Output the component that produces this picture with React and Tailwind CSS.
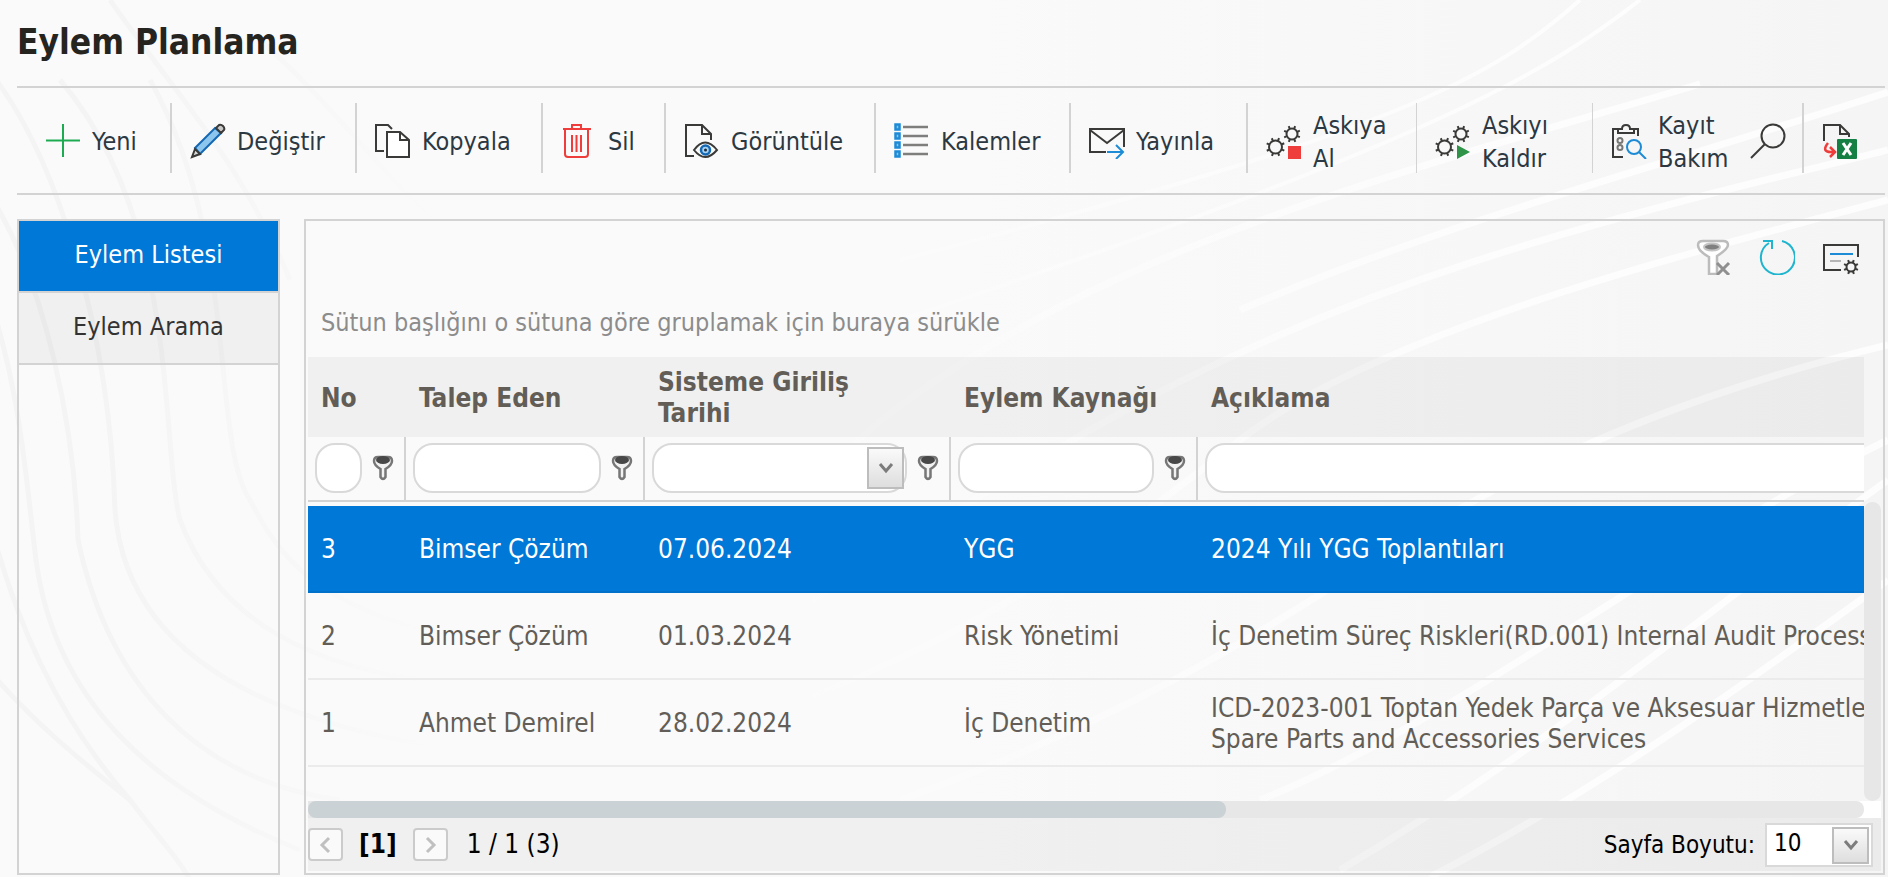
import { useState } from 'react';

const COLUMNS = [
  { key: 'no', label: 'No', width: 'w-[98px]' },
  { key: 'requester', label: 'Talep Eden', width: 'w-[239px]' },
  { key: 'date', label: 'Sisteme Giriliş Tarihi', width: 'w-[306px]', picker: true },
  { key: 'source', label: 'Eylem Kaynağı', width: 'w-[247px]' },
  { key: 'description', label: 'Açıklama', width: '' },
];

const ROWS = [
  { no: 3, requester: 'Bimser Çözüm', date: '07.06.2024', source: 'YGG', description: '2024 Yılı YGG Toplantıları' },
  { no: 2, requester: 'Bimser Çözüm', date: '01.03.2024', source: 'Risk Yönetimi', description: 'İç Denetim Süreç Riskleri(RD.001) Internal Audit Process' },
  { no: 1, requester: 'Ahmet Demirel', date: '28.02.2024', source: 'İç Denetim', description: 'ICD-2023-001 Toptan Yedek Parça ve Aksesuar Hizmetleri\nSpare Parts and Accessories Services' },
];

/* ---------- icons ---------- */

function Svg({ children, className = 'w-9 h-9', viewBox = '0 0 36 36' }) {
  return (
    <svg viewBox={viewBox} className={`shrink-0 ${className}`} fill="none" stroke="#3a3a38" strokeWidth="2" aria-hidden="true">
      {children}
    </svg>
  );
}

function Gear({ cx, cy, r, tooth = 3, width = 2 }) {
  return (
    <g transform={`translate(${cx} ${cy})`} strokeWidth={width}>
      <circle r={r} />
      {[0, 45, 90, 135, 180, 225, 270, 315].map((a) => (
        <path key={a} d={`M0 ${-r}V${-r - tooth}`} transform={`rotate(${a + 22})`} />
      ))}
    </g>
  );
}

const PlusIcon = () => (
  <Svg>
    <path d="M18 1V34M1 17.5H35" stroke="#1dab52" />
  </Svg>
);

const PencilIcon = () => (
  <Svg>
    <path d="M5 25L25 5L31 10L10 31Z" fill="#8cc5ee" stroke="#1468b3" />
    <path d="M26 5L29 2Q31 1 33 3T34 7L31 10Z" fill="#c9c9c9" />
    <path d="M5 26L2 34L10 31Z" fill="#d8d8d8" />
  </Svg>
);

const CopyIcon = () => (
  <Svg>
    <path d="M9 28H1V2H13L17 6" />
    <path d="M12 9H25L34 17V34H12Z" fill="#fff" />
    <path d="M25 9V17H34" />
  </Svg>
);

const TrashIcon = () => (
  <Svg>
    <g stroke="#ee3d3a">
      <path d="M2 6H30M11 6V2H20V6M4 6V31Q4 34 7 34H24Q27 34 27 31V6" />
      <path d="M11 12V29M15.500 12V29M20 12V29" />
    </g>
  </Svg>
);

const PreviewIcon = () => (
  <Svg>
    <path d="M10 33H2V2H18L27 11V17" />
    <path d="M18 2V11H27" />
    <path d="M10 27Q21 12 33 27Q21 41 10 27Z" />
    <circle cx="21.500" cy="27" r="4.500" fill="#a8d2f2" stroke="#1468b3" strokeWidth="2.500" />
    <circle cx="21.500" cy="27" r="1.500" fill="#1c2a38" stroke="none" />
  </Svg>
);

const ListIcon = () => (
  <Svg>
    {[2, 11, 20, 29].map((y) => (
      <g key={y}>
        <rect x="1.500" y={y - 0.5} width="4" height="5" fill="#8cc5ee" stroke="#1d8bd6" strokeWidth="2.500" />
        <path d={`M9 ${y + 2}H34`} stroke="#7e7e7c" strokeWidth="2.500" />
      </g>
    ))}
  </Svg>
);

const MailIcon = () => (
  <Svg>
    <path d="M17 29H1V6H35V24M1 7L18 20L35 7" />
    <path d="M18 29H34M27 22L34 29L27 36" stroke="#1d8bd6" />
  </Svg>
);

const SuspendIcon = () => (
  <Svg>
    <Gear cx={9.5} cy={24} r={6.5} />
    <Gear cx={26} cy={11} r={5.5} />
    <rect x="22" y="23" width="13" height="13" fill="#ee3d3a" stroke="none" />
  </Svg>
);

const ResumeIcon = () => (
  <Svg>
    <Gear cx={9.5} cy={24} r={6.5} />
    <Gear cx={26} cy={11} r={5.5} />
    <path d="M22 22L35 29L22 36Z" fill="#2f9447" stroke="none" />
  </Svg>
);

const MaintainIcon = () => (
  <Svg>
    <path d="M12 34H2V6H6M24 6H27V13" />
    <path d="M7 10V6H11Q11 2 15 2T19 6H23V10Z" />
    <g stroke="#777775">
      <circle cx="9" cy="17.500" r="2.500" />
      <circle cx="9" cy="24.500" r="2.500" />
    </g>
    <g stroke="#1d8bd6">
      <circle cx="23" cy="24" r="7" />
      <path d="M28 29L35 36" />
    </g>
  </Svg>
);

const SearchIcon = () => (
  <Svg>
    <circle cx="23" cy="13" r="11.500" />
    <path d="M15 21L1 35" />
  </Svg>
);

const ExcelIcon = () => (
  <Svg>
    <path d="M2 18V2H18L27 11V14" />
    <path d="M18 2V11H27" />
    <path d="M6 20Q-1 29 9 29H13M8 24L13 29L8 34" stroke="#ee3d3a" strokeWidth="2.500" />
    <rect x="15" y="16" width="20" height="20" rx="1" fill="#158043" stroke="none" />
    <path d="M21 20L29 32M29 20L21 32" stroke="#fff" strokeWidth="3" />
  </Svg>
);

const ClearFilterIcon = () => (
  <Svg>
    <path d="M3 6Q3 2 8 2H28Q33 2 33 6T22 17V35H14V18Q3 12 3 6Z" fill="#fff" stroke="#bcbcbc" strokeWidth="2.500" />
    <ellipse cx="17" cy="8" rx="8" ry="3.500" fill="#808080" stroke="#c4c4c4" />
    <path d="M22 24L34 36M34 24L22 36" stroke="#8f8f8f" strokeWidth="3" />
  </Svg>
);

const RefreshIcon = () => (
  <Svg>
    <path d="M23 2A17 17 0 1 1 10 4M4 2H13V10" stroke="#1fb5ce" />
  </Svg>
);

const LayoutIcon = () => (
  <Svg>
    <path d="M18 31H1V6H35V18" />
    <path d="M7 15H30" stroke="#1d8bd6" />
    <path d="M7 22H18" stroke="#b5b5b5" />
    <Gear cx={28} cy={28} r={4.5} tooth={3} />
  </Svg>
);

const FunnelIcon = () => (
  <Svg className="w-[22px] h-[26px]" viewBox="0 0 22 26">
    <path d="M2 6Q2 2 6 2H16Q20 2 20 6T13.500 14V22Q11 26 8.500 22V14Q2 10 2 6Z" fill="#f2f2f2" stroke="#777" strokeWidth="2.500" />
    <ellipse cx="11" cy="5" rx="7" ry="4" fill="#484848" stroke="none" />
  </Svg>
);

const Chevron = ({ d = 'M4 6L10 13L16 6', color = '#7c7c7c' }) => (
  <Svg className="w-5 h-5" viewBox="0 0 20 20">
    <path d={d} stroke={color} strokeWidth="3" />
  </Svg>
);

/* ---------- page parts ---------- */

const TOOLS = [
  { label: 'Yeni', icon: PlusIcon, box: 'w-[155px] pl-7 border-r-2' },
  { label: 'Değiştir', icon: PencilIcon, box: 'w-[185px] pl-[18px] border-r-2' },
  { label: 'Kopyala', icon: CopyIcon, box: 'w-[186px] pl-[18px] border-r-2' },
  { label: 'Sil', icon: TrashIcon, box: 'w-[123px] pl-[18px] border-r-2' },
  { label: 'Görüntüle', icon: PreviewIcon, box: 'w-[210px] pl-[18px] border-r-2' },
  { label: 'Kalemler', icon: ListIcon, box: 'w-[195px] pl-[18px] border-r-2' },
  { label: 'Yayınla', icon: MailIcon, box: 'w-[177px] pl-[18px] border-r-2' },
  { label: 'Askıya Al', icon: SuspendIcon, box: 'w-[169px] pl-[18px] border-r' },
  { label: 'Askıyı Kaldır', icon: ResumeIcon, box: 'w-[176px] pl-[18px] border-r' },
  { label: 'Kayıt Bakım', icon: MaintainIcon, box: 'w-[140px] pl-[18px]' },
];

function Waves() {
  return (
    <svg className="absolute inset-0 -z-10 w-full h-full" viewBox="0 0 1888 877" preserveAspectRatio="xMidYMid slice" fill="none" aria-hidden="true">
      <defs>
        <linearGradient id="shade" gradientUnits="userSpaceOnUse" x1="100" y1="0" x2="440" y2="0">
          <stop offset="0" stopColor="#f4f4f4" />
          <stop offset="1" stopColor="#f4f4f4" stopOpacity="0" />
        </linearGradient>
        <linearGradient id="streak" gradientUnits="userSpaceOnUse" x1="700" y1="0" x2="1600" y2="0">
          <stop offset="0" stopColor="#fff" stopOpacity="0" />
          <stop offset="1" stopColor="#fff" stopOpacity="0.8" />
        </linearGradient>
      </defs>
      <g stroke="url(#shade)" strokeWidth="5">
        <path d="M-20 60C60 150 110 340 115 510C125 640 240 720 460 750" />
        <path d="M-20 270C20 380 25 470 36 560C55 700 150 790 300 850" />
        <path d="M-20 180C50 280 75 440 78 540C110 690 200 780 340 800" />
        <path d="M60 80C180 220 160 440 180 520C210 600 280 660 420 680" />
        <path d="M150 80C240 240 210 440 250 500C290 580 340 610 460 640" />
        <path d="M-20 480C10 620 60 720 130 800C160 840 180 860 190 880" />
        <path d="M-20 660C30 720 80 760 130 800" />
        <path d="M110 0C180 100 240 160 290 280" />
        <path d="M260 40C340 110 400 200 460 240" />
      </g>
      <g stroke="url(#streak)" strokeWidth="7">
        <path d="M1888 92C1650 170 1450 220 1240 310" />
        <path d="M1700 84C1480 150 1200 220 1000 340S850 480 700 560" />
        <path d="M1888 150C1600 220 1350 280 1090 430S800 640 560 690" />
        <path d="M1888 200C1700 250 1380 330 1240 440S900 700 560 770" />
        <path d="M1888 345C1700 390 1560 450 1440 520S1180 700 900 800" />
        <path d="M1888 440C1700 530 1460 720 1260 800" />
        <path d="M1888 480C1720 600 1560 740 1340 870" />
        <path d="M1888 580C1750 680 1600 790 1430 877" />
        <path d="M1580 0C1490 80 1400 130 900 260" strokeWidth="4" />
        <path d="M1640 0C1550 70 1440 140 900 320" strokeWidth="4" />
      </g>
    </svg>
  );
}

function Toolbar() {
  return (
    <div role="toolbar" className="border-y-2 border-[#d3d3d3] pt-[15px] pb-5 flex text-[#2c3842]">
      {TOOLS.map(({ label, icon: Icon, box }) => (
        <button key={label} type="button" className={`h-[70px] pt-[5px] pr-3 shrink-0 flex items-center gap-[11px] border-[#d3d3d3] text-left leading-[33px] ${box}`}>
          <Icon />
          <span className="min-w-0 pt-[2px]">{label}</span>
        </button>
      ))}
      <button type="button" aria-label="Ara" className="w-[71px] shrink-0 h-[70px] pt-[5px] pl-[17px] flex items-center border-r-2 border-[#d3d3d3]">
        <SearchIcon />
      </button>
      <button type="button" aria-label="Excel'e Aktar" className="h-[70px] pt-[5px] pl-[18px] shrink-0 flex items-center">
        <ExcelIcon />
      </button>
    </div>
  );
}

function Sidebar() {
  const [tab, setTab] = useState('Eylem Listesi');
  return (
    <nav className="w-[263px] shrink-0 border-2 border-[#d3d3d3]">
      {['Eylem Listesi', 'Eylem Arama'].map((t) => (
        <button
          key={t}
          type="button"
          onClick={() => setTab(t)}
          className={`block w-full h-[72px] pb-[2px] border-b-2 border-[#d3d3d3] ${t === tab ? 'bg-[#0078d7] text-white' : 'bg-black/4 text-[#333]'}`}
        >
          {t}
        </button>
      ))}
    </nav>
  );
}

function FilterCell({ column, last }) {
  return (
    <td className={`h-[65px] p-0 border-b-2 border-[#d3d3d3] ${last ? '' : 'border-r-2'}`}>
      <div className="flex items-center pl-[7px] pr-[10px] pb-[2px]">
        <div className="relative flex-1 min-w-0">
          <input type="text" aria-label={column.label} className="block w-full h-[50px] px-3 rounded-[20px] border-2 border-[#d9d9d9] bg-white outline-none" />
          {column.picker && (
            <button type="button" aria-label="Tarih seç" className="absolute right-[3px] top-1 w-[37px] h-[42px] flex items-center justify-center border-2 border-[#bdbdbd] bg-linear-to-b from-[#fafafa] to-[#dedede]">
              <Chevron />
            </button>
          )}
        </div>
        {!last && (
          <button type="button" aria-label={`${column.label} filtresi`} className="ml-[10px]">
            <FunnelIcon />
          </button>
        )}
      </div>
    </td>
  );
}

function ActionTable() {
  const [selected, setSelected] = useState(3);
  return (
    <table className="w-[2640px] table-fixed border-separate border-spacing-0 text-left text-[26px] text-[#625e57] leading-[31px]">
      <thead>
        <tr className="bg-black/4">
          {COLUMNS.map((c) => (
            <th key={c.key} className={`h-20 pt-[2px] pb-0 pl-[13px] pr-8 font-bold ${c.width}`}>{c.label}</th>
          ))}
        </tr>
        <tr>
          {COLUMNS.map((c, i) => (
            <FilterCell key={c.key} column={c} last={i === COLUMNS.length - 1} />
          ))}
        </tr>
      </thead>
      <tbody className="before:block before:h-1">
        {ROWS.map((row) => (
          <tr key={row.no} onClick={() => setSelected(row.no)} className={row.no === selected ? 'bg-[#0078d7] text-white' : ''}>
            {COLUMNS.map((c) => (
              <td
                key={c.key}
                className={`h-[87px] pt-[2px] pb-0 px-[13px] border-b-2 whitespace-pre-line ${row.no === selected ? 'border-[#0071cb]' : 'border-[#ebebeb]'}`}
              >
                {row[c.key]}
              </td>
            ))}
          </tr>
        ))}
      </tbody>
    </table>
  );
}

function PageButton({ label, d }) {
  return (
    <button type="button" aria-label={label} className="w-[35px] h-[33px] flex items-center justify-center rounded border-2 border-[#cbcbcb] bg-[#fafafa]">
      <Chevron d={d} color="#c0c0c0" />
    </button>
  );
}

function Pager() {
  return (
    <div className="h-[53px] bg-black/4 flex items-center justify-between pr-2 text-black">
      <div className="flex items-center text-[26px]">
        <PageButton label="Önceki" d="M13 3L6 10L13 17" />
        <span className="font-bold px-4">[1]</span>
        <PageButton label="Sonraki" d="M7 3L14 10L7 17" />
        <span className="pl-[19px]">1 / 1 (3)</span>
      </div>
      <div className="flex items-center gap-[10px] text-2xl">
        <label htmlFor="page-size">Sayfa Boyutu:</label>
        <div className="relative">
          <select id="page-size" defaultValue="10" className="block w-[108px] h-11 pl-[7px] pb-1 appearance-none border-2 border-[#d9d9d9] bg-white outline-none">
            <option>10</option>
            <option>20</option>
            <option>50</option>
          </select>
          <span className="absolute right-1 top-1 w-[37px] h-[37px] flex items-center justify-center pointer-events-none border-2 border-[#bdbdbd] bg-linear-to-b from-[#fafafa] to-[#dedede]">
            <Chevron />
          </span>
        </div>
      </div>
    </div>
  );
}

export default function App() {
  return (
    <div className="relative isolate min-h-screen overflow-hidden flex flex-col bg-linear-to-r from-[#fafafa] via-[#fafafa] to-[#f5f5f5] pl-[17px] pr-[3px] pb-[2px] font-['DejaVu_Sans_Condensed','Noto_Sans',sans-serif] text-[25px]">
      <Waves />
      <h1 className="h-[86px] pb-[2px] flex items-center text-[35px] font-bold text-[#25241f]">Eylem Planlama</h1>
      <Toolbar />

      <div className="mt-6 flex-1 flex gap-6">
        <Sidebar />

        <main className="flex-1 min-w-0 flex flex-col border-2 border-[#d3d3d3] px-[2px] pb-[2px]">
          <div className="h-[72px] pr-[22px] flex items-center justify-end gap-7">
            <button type="button" aria-label="Filtreyi temizle"><ClearFilterIcon /></button>
            <button type="button" aria-label="Yenile"><RefreshIcon /></button>
            <button type="button" aria-label="Görünüm ayarları"><LayoutIcon /></button>
          </div>
          <p className="h-16 pl-[13px] pb-1 flex items-center text-[#8c8c8c]">Sütun başlığını o sütuna göre gruplamak için buraya sürükle</p>

          <div className="flex-1 flex min-h-0">
            <div className="flex-1 min-w-0 overflow-hidden">
              <ActionTable />
            </div>
            <div className="w-[17px] mt-[145px] rounded-[9px] bg-[#e7e7e7]" />
          </div>
          <div className="flex bg-white">
            <div className="flex-1 h-[17px] bg-[#e7e7e7] rounded-r-lg">
              <div className="h-full w-[59%] rounded-lg bg-[#cbd2d5]" />
            </div>
            <div className="w-[17px]" />
          </div>
          <Pager />
        </main>
      </div>
    </div>
  );
}
